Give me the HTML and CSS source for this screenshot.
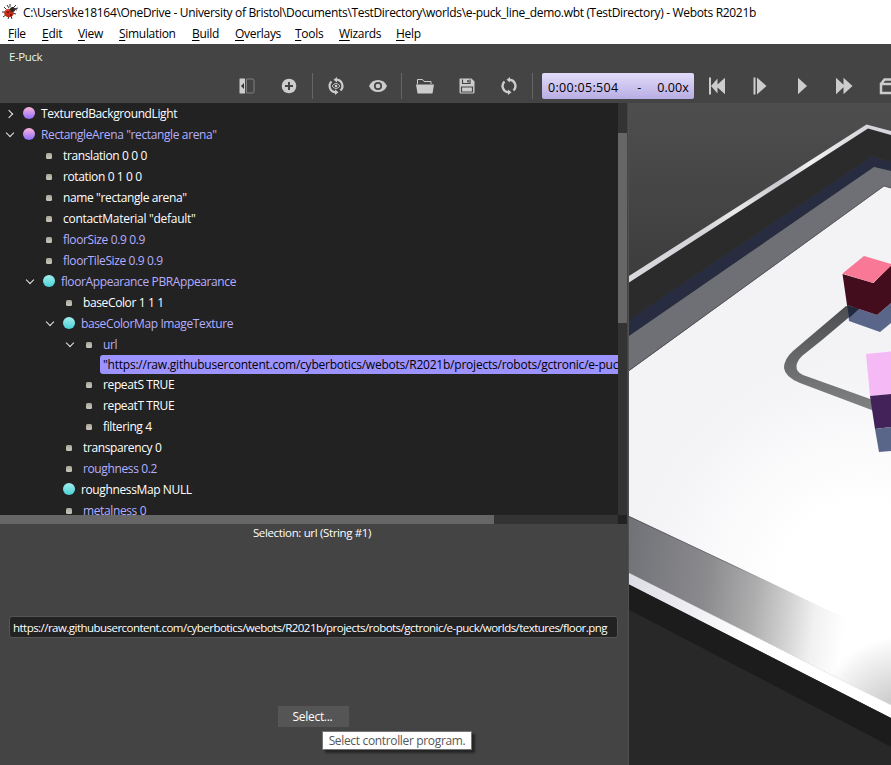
FILE: index.html
```html
<!DOCTYPE html>
<html lang="en">
<head>
<meta charset="utf-8">
<title>Webots R2021b</title>
<link rel="stylesheet" href="styles.css">
</head>
<body>
<header class="titlebar">
  <svg class="bug" width="16" height="16" viewBox="0 0 16 16"><path d="M2 3l3 3M0 8h5M1 13l4-3M6 15l1-3M10 15l-1-3M14 10l-4-1M12 5l4-1M11 4l3-3M8 3V0M11 5l4 1M7 4L5 1" stroke="#333" fill="none"/><ellipse cx="7" cy="9" rx="4.8" ry="4.3" fill="#c62b16"/><circle cx="10.5" cy="5.5" r="2.5" fill="#302725"/><path d="M5 7h2v2H5zM8 10h2v2H8z" fill="#791308"/><path d="M4 6l3 0" stroke="#ff684b"/></svg>
  <span class="title">C:\Users\ke18164\OneDrive - University of Bristol\Documents\TestDirectory\worlds\e-puck_line_demo.wbt (TestDirectory) - Webots R2021b</span>
</header>
<nav class="menu"><span><u>F</u>ile</span><span><u>E</u>dit</span><span><u>V</u>iew</span><span><u>S</u>imulation</span><span><u>B</u>uild</span><span><u>O</u>verlays</span><span><u>T</u>ools</span><span><u>W</u>izards</span><span><u>H</u>elp</span></nav>
<div class="caption">E-Puck</div>
<div class="toolbar">
  <i class="btn"><svg width="18" height="18" viewBox="0 0 18 18"><path d="M2 1.5h5v15H2q-.5 0-.5-.5V2q0-.5.5-.5z" fill="#ccc"/><path d="M6 6v6L3 9z" fill="#333"/><path d="M8.5 2h6q1.500 0 1.500 1.500v11q0 1.500-1.500 1.500h-6z" fill="none" stroke="#808080"/></svg></i>
  <i class="btn"><svg width="18" height="18" viewBox="0 0 18 18"><circle cx="9" cy="9" r="7.300" fill="#ccc"/><path d="M9 5v8M5 9h8" stroke="#444" stroke-width="2"/></svg></i>
  <i class="sep"></i>
  <i class="btn"><svg width="18" height="18" viewBox="0 0 18 18"><g fill="none" stroke="#ccc" stroke-width="2.200"><path d="M9.500 2.700A6.300 6.300 0 0 1 13.500 13.500M8.500 15.300A6.300 6.300 0 0 1 4.500 4.500"/></g><path d="M10 0v5.400L6.500 2.700zM8 12.600V18l3.500-2.700z" fill="#ccc"/><path d="M5 9q4-5 8 0q-4 5-8 0z" fill="none" stroke="#bbb"/><circle cx="9" cy="9" r="1.300" fill="#ccc"/></svg></i>
  <i class="btn"><svg width="18" height="18" viewBox="0 0 18 18"><path d="M0 9Q2.700 3 9 3t9 6q-2.700 6-9 6T0 9z" fill="#ccc"/><circle cx="9" cy="9" r="3.200" fill="#ccc" stroke="#444" stroke-width="1.700"/></svg></i>
  <i class="sep"></i>
  <i class="btn"><svg width="18" height="18" viewBox="0 0 18 18"><path d="M1.500 7V2.500h5l1.500 2h7V7" fill="none" stroke="#ccc"/><path d="M0 7.500h18l-1.500 9h-15z" fill="#ccc"/></svg></i>
  <i class="btn"><svg width="18" height="18" viewBox="0 0 18 18"><path d="M2 1.500h11.500l3 3V15q0 1.500-1.500 1.500H3Q1.500 16.500 1.500 15V2z" fill="#ccc"/><path d="M4.500 2.500v4h7.500v-4M3.500 10h11v5h-11z" fill="none" stroke="#444" stroke-width="1.200"/><path d="M10 3v2.500" stroke="#444" stroke-width="1.500"/></svg></i>
  <i class="btn"><svg width="18" height="18" viewBox="0 0 18 18"><g fill="none" stroke="#ccc" stroke-width="2.400"><path d="M9.500 2.700A6.300 6.300 0 0 1 13.500 13.500M8.500 15.300A6.300 6.300 0 0 1 4.500 4.500"/></g><path d="M10 0v5.400L6.500 2.700zM8 12.600V18l3.500-2.700z" fill="#ccc"/></svg></i>
  <i class="sep"></i>
  <div class="clock"><span class="time">0:00:05:504</span><span class="dash">-</span><span class="speed">0.00x</span></div>
  <i class="btn"><svg width="18" height="18" viewBox="0 0 18 18"><path d="M1 .5h2V9l6.500-7.500v6L17 .7v16.600l-7.500-6.800v6L3 9v8.500H1z" fill="#ccc"/></svg></i>
  <i class="btn step"><svg width="18" height="18" viewBox="0 0 18 18"><path d="M2.500 .5h2v17h-2zM6 .5L15.500 9 6 17.500z" fill="#ccc"/></svg></i>
  <i class="btn"><svg width="18" height="18" viewBox="0 0 18 18"><path d="M5 .7L14 9l-9 8.300z" fill="#ccc"/></svg></i>
  <i class="btn"><svg width="18" height="18" viewBox="0 0 18 18"><path d="M1 .7l7.500 7V.7L17.500 9l-9 8.300v-7L1 17.300z" fill="#ccc"/></svg></i>
  <i class="btn last"><svg width="18" height="18" viewBox="0 0 18 18"><path d="M2 7h14v9H2zM2 7l3.500-4.500h9L17 7" fill="none" stroke="#ccc" stroke-width="2.500"/></svg></i>
</div>
<main class="body">
  <section class="side">
    <div class="treebox">
      <div class="tree">
        <div class="row l0"><b class="arrow shut"></b><b class="ball violet"></b><span>TexturedBackgroundLight</span></div>
        <div class="row l0 mod"><b class="arrow"></b><b class="ball violet"></b><span>RectangleArena "rectangle arena"</span></div>
        <div class="row l1"><b class="dot"></b><span>translation 0 0 0</span></div>
        <div class="row l1"><b class="dot"></b><span>rotation 0 1 0 0</span></div>
        <div class="row l1"><b class="dot"></b><span>name "rectangle arena"</span></div>
        <div class="row l1"><b class="dot"></b><span class="wide">contactMaterial "default"</span></div>
        <div class="row l1 mod"><b class="dot"></b><span>floorSize 0.9 0.9</span></div>
        <div class="row l1 mod"><b class="dot"></b><span>floorTileSize 0.9 0.9</span></div>
        <div class="row l1 mod"><b class="arrow"></b><b class="ball cyan"></b><span>floorAppearance PBRAppearance</span></div>
        <div class="row l2"><b class="dot"></b><span>baseColor 1 1 1</span></div>
        <div class="row l2 mod"><b class="arrow"></b><b class="ball cyan"></b><span>baseColorMap ImageTexture</span></div>
        <div class="row l3 mod"><b class="arrow"></b><b class="dot"></b><span>url</span></div>
        <div class="picked">"https://raw.githubusercontent.com/cyberbotics/webots/R2021b/projects/robots/gctronic/e-puck/worlds/textures/floor.png"</div>
        <div class="row l3"><b class="dot"></b><span>repeatS TRUE</span></div>
        <div class="row l3"><b class="dot"></b><span>repeatT TRUE</span></div>
        <div class="row l3"><b class="dot"></b><span>filtering 4</span></div>
        <div class="row l2"><b class="dot"></b><span>transparency 0</span></div>
        <div class="row l2 mod"><b class="dot"></b><span>roughness 0.2</span></div>
        <div class="row l2"><b class="ball cyan"></b><span>roughnessMap NULL</span></div>
        <div class="row l2 mod"><b class="dot"></b><span>metalness 0</span></div>
      </div>
      <div class="vscroll"><div class="vthumb"></div></div>
      <div class="hscroll"><div class="hthumb"></div></div>
      <div class="corner"></div>
    </div>
    <div class="selection">Selection: url (String #1)</div>
    <div class="field"><span>https://raw.githubusercontent.com/cyberbotics/webots/R2021b/projects/robots/gctronic/e-puck/worlds/textures/floor.png</span></div>
    <div class="select">Select...<div class="tip">Select controller program.</div></div>
  </section>
  <svg class="scene" width="262" height="662" viewBox="629 103 262 662">
    <defs>
      <linearGradient id="sky" x1="0" y1="0" x2="0" y2="1"><stop offset="0" stop-color="#4e4e4e"/><stop offset=".28" stop-color="#3c3c3c"/></linearGradient>
      <radialGradient id="floor" gradientUnits="userSpaceOnUse" cx="865" cy="590" r="230"><stop offset="0" stop-color="#fff"/><stop offset=".38" stop-color="#fff"/><stop offset="1" stop-color="#f3f3f6"/></radialGradient>
      <linearGradient id="shade" gradientUnits="userSpaceOnUse" x1="629" y1="560" x2="850" y2="590"><stop offset="0" stop-color="#727378"/><stop offset=".36" stop-color="#8b8b8e"/><stop offset=".58" stop-color="#adadae"/><stop offset=".74" stop-color="#d2d2d2"/><stop offset=".86" stop-color="#f1f1f1"/><stop offset="1" stop-color="#fff"/></linearGradient>
      <linearGradient id="edge" gradientUnits="userSpaceOnUse" x1="629" y1="0" x2="800" y2="0"><stop offset="0" stop-color="#58585e"/><stop offset=".6" stop-color="#77777b"/><stop offset="1" stop-color="#ddd" stop-opacity="0"/></linearGradient>
      <linearGradient id="rim" gradientUnits="userSpaceOnUse" x1="629" y1="0" x2="750" y2="0"><stop offset="0" stop-color="#dddde5"/><stop offset="1" stop-color="#fff"/></linearGradient>
      <linearGradient id="rail" gradientUnits="userSpaceOnUse" x1="629" y1="280" x2="867" y2="126"><stop offset="0" stop-color="#dadade"/><stop offset=".3" stop-color="#d3d3d8"/><stop offset=".45" stop-color="#eaeaeb"/><stop offset=".63" stop-color="#c8c8ce"/><stop offset=".76" stop-color="#f1f1f1"/><stop offset="1" stop-color="#d5d5dc"/></linearGradient>
      <linearGradient id="line" x1="0" y1="0" x2="0" y2="1"><stop offset="0" stop-color="#4c4d50"/><stop offset="1" stop-color="#818282"/></linearGradient>
      <radialGradient id="low" gradientUnits="userSpaceOnUse" cx="900" cy="722" r="85"><stop offset="0" stop-color="#bbb"/><stop offset="1" stop-color="#bbb" stop-opacity="0"/></radialGradient>
    </defs>
    <path fill="url(#sky)" d="M629 103h262v662H629z"/>
    <path fill="url(#floor)" d="M629 371L884 186l7 2v517L629 573z"/>
    <path fill="#2b2b2b" d="M629 281L868 127l23 6v29l-19-5.500L629 320z"/>
    <path fill="#272c40" d="M629 320l243-163.500 19 5.500v9l-17-4L629 336z"/>
    <path fill="#6f7075" d="M629 336L874 167l17 4v17l-7-2L629 370.500z"/>
    <path fill="none" stroke="#515157" stroke-width=".8" d="M629 370.500L884 186l7 2"/>
    <path fill="url(#rail)" d="M629 276L866.500 124.500l24.500 6.500v4l-23-6.500L629 282.500z"/>
    <path fill="url(#shade)" d="M629 516l201 95 61 28v66L629 573z"/>
    <path fill="none" stroke="url(#edge)" stroke-width="1" d="M629 516.500L800 597"/>
    <path fill="url(#low)" d="M800 620h91v85l-91-45z"/>
    <path fill="url(#rim)" d="M629 573l262 132v13L629 584.500z"/>
    <path fill="#282828" d="M629 610l262 137v18H629z"/>
    <path fill="#1c1c1c" d="M629 584.500L891 718v29L629 610z"/>
    <path fill="url(#line)" d="M846 306L793 351Q784 359 784 368Q785 377 800 383L873 410.500V400L803 375Q796 372 796.500 366Q797 361 802 356L822 340L860 308z"/>
    <path fill="#5a6689" d="M847 305l30 10 14-12v20l-11 9-31-11z"/>
    <path fill="#22293c" d="M847 305l12 4-10 9z"/>
    <path fill="#430d1e" d="M842.500 274l31 9L891 265v38l-14 12-30-10z"/>
    <path fill="#f87896" d="M842.500 273.500L864 256l27 8v2l-18 17z"/>
    <path fill="#f5baf5" d="M866 354l25-2.500V394l-21 2z"/>
    <path fill="#432259" d="M870 396l21-2v33l-16 2z"/>
    <path fill="#5a6689" d="M875 429l16-2v24l-12 1z"/>
  </svg>
</main>
</body>
</html>
```
FILE: styles.css
```css
* { box-sizing: border-box; }
body { margin: 0; width: 891px; height: 765px; overflow: hidden; background: #444; color: #fff; font: 12px "Open Sans", "Noto Sans", sans-serif; letter-spacing: -0.3px; white-space: nowrap; }
.titlebar { height: 24px; background: #fff; color: #000; display: flex; align-items: center; padding-left: 2px; gap: 5px; letter-spacing: -0.33px; }
.menu { height: 20px; background: #fff; color: #000; padding-left: 8px; display: grid; grid-template-columns: 34px 36px 41px 73px 43px 60px 44px 57px auto; line-height: 20px; }
.menu u { text-underline-offset: 2px; }
.caption { height: 25px; padding-left: 9px; line-height: 26px; font-size: 11.500px; letter-spacing: -0.4px; color: #e0f5e8; }
.toolbar { height: 34px; padding-left: 226px; display: flex; align-items: center; overflow: hidden; }
.btn { width: 42px; height: 34px; flex: none; display: flex; align-items: center; justify-content: center; }
.btn svg { display: block; }
.step { margin-left: 1px; }
.sep { width: 1px; height: 26px; margin: 0 2px; flex: none; background: #666; }
.clock { width: 152px; height: 26px; margin: 0 2px 0 7px; flex: none; border-radius: 2px; background: linear-gradient(#e2dcfa, #b8ade3); color: #000; display: flex; align-items: center; padding: 2px 5px 0 6px; font-size: 12.500px; letter-spacing: 0.3px; }
.dash { margin-left: 19px; }
.speed { margin-left: auto; letter-spacing: 0.1px; }
.last { margin-left: 2px; }
.body { height: 662px; display: flex; }
.side { width: 629px; height: 662px; flex: none; border-right: 1px solid #505050; }
.scene { display: block; flex: none; }
.treebox { width: 627px; height: 421px; display: grid; grid-template: 412px 9px / 618px 9px; background: #222; }
.tree { overflow: hidden; }
.row { height: 21px; display: flex; align-items: center; letter-spacing: -0.38px; }
.row span { line-height: 21px; }
.row .wide { letter-spacing: -0.28px; }
.mod { color: #b5aeff; }
.l0 { padding-left: 4px; }
.l1 { padding-left: 24px; }
.l2 { padding-left: 44px; }
.l3 { padding-left: 64px; }
.arrow { width: 12px; height: 12px; margin-right: 7px; display: grid; place-items: center; }
.arrow::before { content: ""; width: 5px; height: 5px; margin: -3px 1px 0 0; border: solid #e8e8e8; border-width: 0 1.500px 1.500px 0; transform: rotate(45deg); }
.shut::before { transform: rotate(-45deg); margin: 0 2px 0 0; }
.ball { width: 12px; height: 12px; border-radius: 50%; margin-right: 6px; margin-top: -1px; }
.violet { background: linear-gradient(#ffb5dc, #8d6dff); }
.cyan { background: linear-gradient(#a5eeed, #47d2d6); }
.dot { width: 6px; height: 6px; border-radius: 1.500px; margin: 0 11px 0 22px; background: linear-gradient(#aaa698, #c8c6bc); }
.arrow + .dot { margin-left: 3px; }
.row > .ball:first-child { margin-left: 19px; }
.picked { height: 19px; line-height: 19px; margin-left: 100px; padding-left: 3px; border-radius: 3px 0 0 3px; background: #9d93ff; color: #000; letter-spacing: -0.225px; overflow: hidden; }
.vscroll { background: #333; padding-top: 30px; }
.vthumb { height: 190px; background: #666; }
.hscroll { background: #333; }
.hthumb { width: 494px; height: 9px; background: #666; }
.selection { height: 20px; line-height: 18px; padding-right: 4px; text-align: center; font-size: 11.500px; letter-spacing: -0.35px; }
.field { width: 609px; height: 22px; margin: 72px 0 0 9px; padding-left: 3px; border: 1px solid #555; border-radius: 3px; background: #222; line-height: 21px; font-size: 11.500px; letter-spacing: -0.535px; }
.select { position: relative; width: 71px; height: 21px; margin: 68px 0 0 278px; padding-right: 2px; background: #555; line-height: 22px; text-align: center; }
.tip { position: absolute; left: 44px; top: 25px; width: 150px; height: 19px; border: 1px solid #767676; background: #fff; color: #575757; line-height: 18px; letter-spacing: -0.34px; box-shadow: 3px 3px 2px rgba(0, 0, 0, .45); }
```
